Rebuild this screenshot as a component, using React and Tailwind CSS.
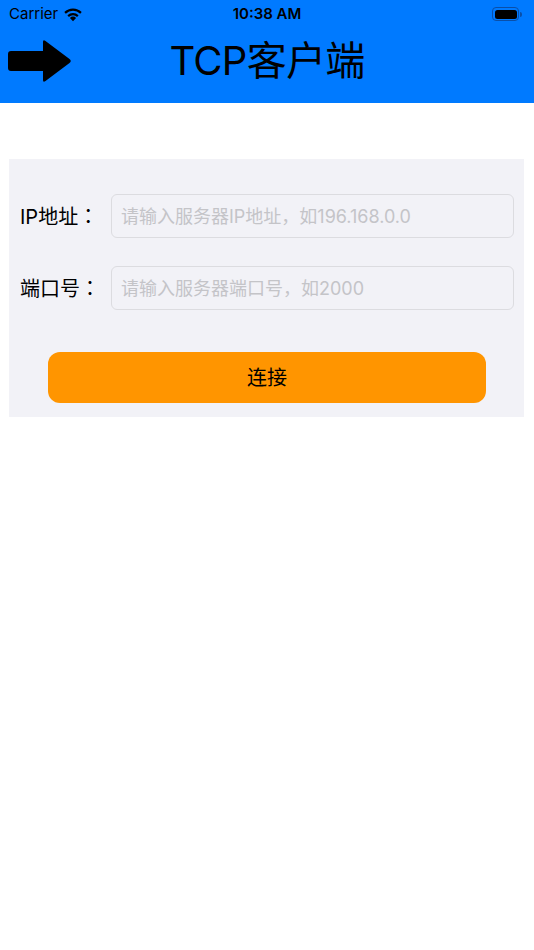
import React from 'react';

const FONT = { fontFamily: 'Inter, "Noto Sans CJK SC", sans-serif' };

const Wifi = () => (
  <svg width="20" height="15" viewBox="0 0 20 15" className="ml-[5px]">
    <path d="M10 14.2 L6.9 10.9 A4.5 4.5 0 0 1 13.1 10.9 Z" fill="#000" />
    <path d="M4.4 8.3 A8 8 0 0 1 15.6 8.3 L14.1 9.9 A5.8 5.8 0 0 0 5.9 9.9 Z" fill="#000" />
    <path d="M1.3 5.1 A12.4 12.4 0 0 1 18.7 5.1 L17.2 6.7 A10.2 10.2 0 0 0 2.8 6.7 Z" fill="#000" />
  </svg>
);

const Battery = () => (
  <div className="flex items-center">
    <div className="w-[27px] h-[14px] rounded-[4px] border border-[#0a4fa8] p-[1.5px]">
      <div className="w-full h-full rounded-[2.5px] bg-black" />
    </div>
    <div className="w-[2px] h-[5px] rounded-r-sm bg-[#0a4fa8] ml-[1px]" />
  </div>
);

const Arrow = () => (
  <svg width="64" height="44" viewBox="0 0 64 44">
    <path
      d="M3 12 H35 V3 Q35 0 37.5 2 L61.5 20 Q64 22 61.5 24 L37.5 42 Q35 44 35 41 V32 H3 Q0 32 0 29 V15 Q0 12 3 12 Z"
      fill="#000"
    />
  </svg>
);

const Field = ({ label, placeholder, className = '' }) => (
  <div className={`flex items-center ${className}`}>
    <span className="w-[102px] pl-[11px] text-[20px] text-black shrink-0">
      {label}
      <span className="font-['Noto_Sans_CJK_TC']">：</span>
    </span>
    <input
      placeholder={placeholder}
      className="flex-1 h-[44px] mr-[10px] rounded-[6px] border border-[#dcdce0] bg-[#f2f2f7] px-[9px] text-[18px] placeholder:text-[#c4c4c8] outline-none"
      style={FONT}
    />
  </div>
);

export default function App() {
  return (
    <div className="w-[534px] h-[950px] bg-white" style={FONT}>
      <div className="bg-[#007aff] h-[103px]">
        <div className="h-[28px] grid grid-cols-[1fr_auto_1fr] items-center px-[9px]">
          <div className="flex items-center">
            <span className="text-[15px] text-black">Carrier</span>
            <Wifi />
          </div>
          <span className="text-[15px] font-semibold text-black">10:38 AM</span>
          <div className="flex justify-end mr-[3px]">
            <Battery />
          </div>
        </div>
        <div className="h-[75px] grid grid-cols-[1fr_auto_1fr] items-start">
          <div className="pl-[8px] pt-[11px]">
            <Arrow />
          </div>
          <h1 className="pt-[5px] text-[40px] text-black whitespace-nowrap leading-[56px] tracking-[-0.7px]">
            TCP客户端
          </h1>
          <div />
        </div>
      </div>

      <div className="mt-[56px] ml-[9px] mr-[10px] bg-[#f2f2f7] pt-[35px] pb-[14px]">
        <Field label="IP地址" placeholder="请输入服务器IP地址，如196.168.0.0" />
        <Field label="端口号" placeholder="请输入服务器端口号，如2000" className="mt-[28px]" />
        <div className="px-[39px] mt-[42px]">
          <button className="w-[438px] h-[51px] rounded-[12px] bg-[#ff9500] text-[20px] text-black">
            连接
          </button>
        </div>
      </div>
    </div>
  );
}
